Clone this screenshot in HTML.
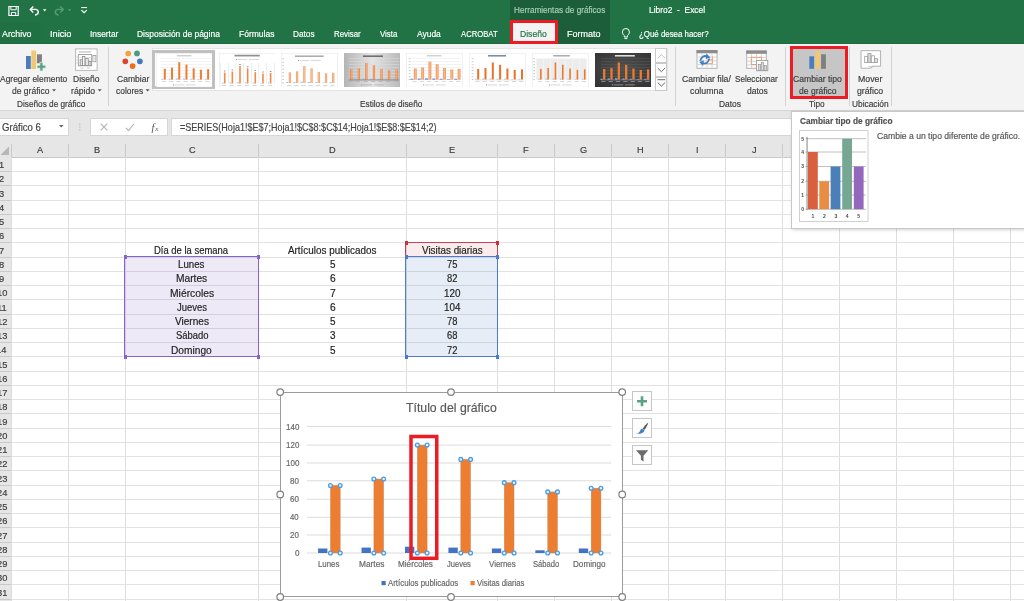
<!DOCTYPE html>
<html lang="es"><head><meta charset="utf-8"><title>Libro2 - Excel</title>
<style>
html,body{margin:0;padding:0;background:#fff;}
body{width:1024px;height:601px;overflow:hidden;position:relative;font-family:"Liberation Sans",sans-serif;}
#app{will-change:transform;position:absolute;left:0;top:0;width:1024px;height:601px;overflow:hidden;}
.r{position:absolute;display:block;}
.t{position:absolute;white-space:pre;display:block;-webkit-text-stroke:0.18px currentColor;}
</style></head><body><div id="app">
<div class="r" style="left:0.00px;top:0.00px;width:1024.00px;height:44.00px;background:#217346;"></div>
<div class="r" style="left:0.00px;top:22.50px;width:41.30px;height:21.50px;background:#207044;"></div>
<div class="r" style="left:0.00px;top:43.00px;width:1024.00px;height:1.00px;background:#1e6c42;"></div>
<div class="r" style="left:509.80px;top:0.00px;width:100.40px;height:44.00px;background:#1b5e39;"></div>
<span class="t" style="left:1.88px;top:27.50px;font-size:9.40px;line-height:12px;color:#fff;transform:scaleX(0.9440);transform-origin:0 0;">Archivo</span>
<span class="t" style="left:49.95px;top:27.50px;font-size:9.40px;line-height:12px;color:#fff;transform:scaleX(0.9815);transform-origin:0 0;">Inicio</span>
<span class="t" style="left:90.03px;top:27.50px;font-size:9.40px;line-height:12px;color:#fff;transform:scaleX(0.8916);transform-origin:0 0;">Insertar</span>
<span class="t" style="left:137.10px;top:27.50px;font-size:9.40px;line-height:12px;color:#fff;transform:scaleX(0.9035);transform-origin:0 0;">Disposición de página</span>
<span class="t" style="left:239.30px;top:27.50px;font-size:9.40px;line-height:12px;color:#fff;transform:scaleX(0.9064);transform-origin:0 0;">Fórmulas</span>
<span class="t" style="left:293.32px;top:27.50px;font-size:9.40px;line-height:12px;color:#fff;transform:scaleX(0.8787);transform-origin:0 0;">Datos</span>
<span class="t" style="left:333.95px;top:27.50px;font-size:9.40px;line-height:12px;color:#fff;transform:scaleX(0.8405);transform-origin:0 0;">Revisar</span>
<span class="t" style="left:380.17px;top:27.50px;font-size:9.40px;line-height:12px;color:#fff;transform:scaleX(0.8391);transform-origin:0 0;">Vista</span>
<span class="t" style="left:417.08px;top:27.50px;font-size:9.40px;line-height:12px;color:#fff;transform:scaleX(0.9011);transform-origin:0 0;">Ayuda</span>
<span class="t" style="left:460.58px;top:27.50px;font-size:9.40px;line-height:12px;color:#fff;transform:scaleX(0.8207);transform-origin:0 0;">ACROBAT</span>
<div class="r" style="left:512.00px;top:22.00px;width:44.00px;height:22.00px;background:#f3f3f3;"></div>
<span class="t" style="left:520.09px;top:27.50px;font-size:9.40px;line-height:12px;color:#217346;transform:scaleX(0.9148);transform-origin:0 0;">Diseño</span>
<div class="r" style="left:509.70px;top:20.40px;width:48.70px;height:23.80px;border:3.300px solid #ed1c24;box-sizing:border-box;"></div>
<span class="t" style="left:567.26px;top:27.50px;font-size:9.40px;line-height:12px;color:#fff;transform:scaleX(0.9606);transform-origin:0 0;">Formato</span>
<span class="t" style="left:639.49px;top:27.50px;font-size:9.40px;line-height:12px;color:#fff;transform:scaleX(0.8401);transform-origin:0 0;">¿Qué desea hacer?</span>
<span class="t" style="left:514.33px;top:4.00px;font-size:9.40px;line-height:12px;color:#a9d0b9;transform:scaleX(0.8710);transform-origin:0 0;">Herramientas de gráficos</span>
<span class="t" style="left:648.81px;top:4.00px;font-size:9.40px;line-height:12px;color:#fff;transform:scaleX(0.8973);transform-origin:0 0;">Libro2  -  Excel</span>
<svg class="r" style="left:0;top:0" width="1024" height="44" viewBox="0 0 1024 44">
<g fill="none" stroke="#fff" stroke-width="1.2">
<path d="M8.900 6.500h9.300v9h-9.300z"/><path d="M10.900 6.500v3.300h5.300v-3.300" stroke-width="1"/><path d="M11.400 15.500v-3h4.300v3" stroke-width="1"/>
<path d="M30.300 9.400h5.300a2.700 2.700 0 0 1 2.700 2.700c0 1.600-1.300 2.700-3.300 2.900" stroke-width="1.400"/><path d="M33.300 6.400l-3 3 3 3" stroke-width="1.400"/>
<path d="M63.300 9.400h-5.300a2.700 2.700 0 0 0-2.700 2.700c0 1.600 1.300 2.700 3.300 2.900" stroke="#5a9c7a" stroke-width="1.400"/><path d="M60.300 6.400l3 3-3 3" stroke="#5a9c7a" stroke-width="1.400"/>
<path d="M81.200 7.600h5.800" stroke-width="1"/><path d="M81.400 10.100l2.700 2.600 2.700-2.600"/>
</g>
<path d="M42.900 9.200h3.600l-1.800 2.200z" fill="#fff"/><path d="M68 9.200h3.200l-1.600 2z" fill="#5a9c7a"/>
<g fill="none" stroke="#fff" stroke-width="1"><path d="M624.300 35.600c-1.400-1.400-1.900-2.300-1.900-3.600a3.500 3.500 0 0 1 7 0c0 1.300-.5 2.200-1.900 3.600v1.400h-3.200z"/><path d="M624.500 38.600h2.800"/></g>
</svg>
<div class="r" style="left:0.00px;top:44.00px;width:1024.00px;height:66.00px;background:#f3f3f3;"></div>
<div class="r" style="left:0.00px;top:110.00px;width:1024.00px;height:1.00px;background:#d6d6d6;"></div>
<div class="r" style="left:0.00px;top:111.00px;width:1024.00px;height:30.00px;background:#e6e6e6;"></div>
<div class="r" style="left:107.80px;top:47.00px;width:1.00px;height:59.00px;background:#d2d2d2;"></div>
<div class="r" style="left:675.30px;top:47.00px;width:1.00px;height:59.00px;background:#d2d2d2;"></div>
<div class="r" style="left:785.30px;top:47.00px;width:1.00px;height:59.00px;background:#d2d2d2;"></div>
<div class="r" style="left:849.20px;top:47.00px;width:1.00px;height:59.00px;background:#d2d2d2;"></div>
<div class="r" style="left:891.00px;top:47.00px;width:1.00px;height:59.00px;background:#d2d2d2;"></div>
<span class="t" style="left:0.48px;top:72.80px;font-size:9.40px;line-height:12px;color:#3c3c3c;transform:scaleX(0.9016);transform-origin:0 0;">Agregar elemento</span>
<span class="t" style="left:12.14px;top:84.75px;font-size:9.40px;line-height:12px;color:#3c3c3c;transform:scaleX(0.9088);transform-origin:0 0;">de gráfico</span>
<span class="t" style="left:73.10px;top:72.80px;font-size:9.40px;line-height:12px;color:#3c3c3c;transform:scaleX(0.9077);transform-origin:0 0;">Diseño</span>
<span class="t" style="left:71.22px;top:84.75px;font-size:9.40px;line-height:12px;color:#3c3c3c;transform:scaleX(0.9239);transform-origin:0 0;">rápido</span>
<span class="t" style="left:16.62px;top:97.80px;font-size:9.40px;line-height:12px;color:#3c3c3c;transform:scaleX(0.8789);transform-origin:0 0;">Diseños de gráfico</span>
<span class="t" style="left:117.06px;top:72.80px;font-size:9.40px;line-height:12px;color:#3c3c3c;transform:scaleX(0.9115);transform-origin:0 0;">Cambiar</span>
<span class="t" style="left:116.44px;top:84.75px;font-size:9.40px;line-height:12px;color:#3c3c3c;transform:scaleX(0.8964);transform-origin:0 0;">colores</span>
<span class="t" style="left:360.17px;top:97.80px;font-size:9.40px;line-height:12px;color:#3c3c3c;transform:scaleX(0.8798);transform-origin:0 0;">Estilos de diseño</span>
<span class="t" style="left:682.31px;top:72.80px;font-size:9.40px;line-height:12px;color:#3c3c3c;transform:scaleX(0.9276);transform-origin:0 0;">Cambiar fila/</span>
<span class="t" style="left:690.32px;top:84.75px;font-size:9.40px;line-height:12px;color:#3c3c3c;transform:scaleX(0.9394);transform-origin:0 0;">columna</span>
<span class="t" style="left:735.28px;top:72.80px;font-size:9.40px;line-height:12px;color:#3c3c3c;transform:scaleX(0.8716);transform-origin:0 0;">Seleccionar</span>
<span class="t" style="left:746.54px;top:84.75px;font-size:9.40px;line-height:12px;color:#3c3c3c;transform:scaleX(0.9074);transform-origin:0 0;">datos</span>
<span class="t" style="left:718.81px;top:97.80px;font-size:9.40px;line-height:12px;color:#3c3c3c;transform:scaleX(0.8957);transform-origin:0 0;">Datos</span>
<div class="r" style="left:793.00px;top:47.50px;width:52.50px;height:48.50px;background:#c6c6c6;"></div>
<div class="r" style="left:790.20px;top:45.70px;width:58.00px;height:53.20px;border:3.200px solid #ed1c24;box-sizing:border-box;"></div>
<span class="t" style="left:793.46px;top:72.80px;font-size:9.40px;line-height:12px;color:#3c3c3c;transform:scaleX(0.9196);transform-origin:0 0;">Cambiar tipo</span>
<span class="t" style="left:798.74px;top:84.75px;font-size:9.40px;line-height:12px;color:#3c3c3c;transform:scaleX(0.9138);transform-origin:0 0;">de gráfico</span>
<span class="t" style="left:809.06px;top:97.80px;font-size:9.40px;line-height:12px;color:#3c3c3c;transform:scaleX(0.8767);transform-origin:0 0;">Tipo</span>
<span class="t" style="left:858.03px;top:72.80px;font-size:9.40px;line-height:12px;color:#3c3c3c;transform:scaleX(0.9329);transform-origin:0 0;">Mover</span>
<span class="t" style="left:857.38px;top:84.75px;font-size:9.40px;line-height:12px;color:#3c3c3c;transform:scaleX(0.9298);transform-origin:0 0;">gráfico</span>
<span class="t" style="left:852.11px;top:97.80px;font-size:9.40px;line-height:12px;color:#3c3c3c;transform:scaleX(0.8888);transform-origin:0 0;">Ubicación</span>
<svg class="r" style="left:0;top:44px" width="1024" height="70" viewBox="0 44 1024 70"><g fill="#555"><path d="M52 89.300h4l-2 2.300z"/><path d="M97.700 89.300h4l-2 2.300z"/><path d="M145.600 89.300h4l-2 2.300z"/></g></svg>
<div class="r" style="left:151.50px;top:47.80px;width:516.00px;height:43.20px;background:#fff;border:1px solid #e4e4e4;box-sizing:border-box;"></div>
<div class="r" style="left:152.30px;top:49.70px;width:62.70px;height:39.80px;border:3.300px solid #c0c0c0;box-sizing:border-box;"></div>
<svg class="r" style="left:155.8px;top:52.5px" width="56.5" height="34.3" viewBox="0 0 56.500 34.300"><rect x=".25" y=".25" width="56" height="33.800" fill="#fff" stroke="#e3e3e3" stroke-width=".5"/><rect x="4.7" y="26.35" width="50.3" height=".5" fill="#e6e6e6"/><rect x="4.7" y="23.38" width="50.3" height=".5" fill="#e6e6e6"/><rect x="4.7" y="20.41" width="50.3" height=".5" fill="#e6e6e6"/><rect x="4.7" y="17.44" width="50.3" height=".5" fill="#e6e6e6"/><rect x="4.7" y="14.46" width="50.3" height=".5" fill="#e6e6e6"/><rect x="4.7" y="11.49" width="50.3" height=".5" fill="#e6e6e6"/><rect x="4.7" y="8.52" width="50.3" height=".5" fill="#e6e6e6"/><rect x="4.7" y="5.55" width="50.3" height=".5" fill="#e6e6e6"/><rect x="7.80" y="15.72" width="2.00" height="10.88" fill="#ed7d31"/><rect x="5.40" y="25.66" width="2.00" height="0.94" fill="#a9c3ea"/><rect x="15.02" y="14.71" width="2.00" height="11.89" fill="#ed7d31"/><rect x="12.62" y="25.47" width="2.00" height="1.13" fill="#a9c3ea"/><rect x="22.24" y="9.20" width="2.00" height="17.40" fill="#ed7d31"/><rect x="19.84" y="25.28" width="2.00" height="1.32" fill="#a9c3ea"/><rect x="29.46" y="11.52" width="2.00" height="15.08" fill="#ed7d31"/><rect x="27.06" y="25.47" width="2.00" height="1.13" fill="#a9c3ea"/><rect x="36.68" y="15.29" width="2.00" height="11.31" fill="#ed7d31"/><rect x="34.28" y="25.66" width="2.00" height="0.94" fill="#a9c3ea"/><rect x="43.90" y="16.74" width="2.00" height="9.86" fill="#ed7d31"/><rect x="41.50" y="26.03" width="2.00" height="0.57" fill="#a9c3ea"/><rect x="51.12" y="16.16" width="2.00" height="10.44" fill="#ed7d31"/><rect x="48.72" y="25.66" width="2.00" height="0.94" fill="#a9c3ea"/><rect x="20.9" y="2.25" width="14.5" height="1.1" fill="#c2c2c2"/><rect x="5.90" y="28.20" width="4.200" height=".800" fill="#cfcfcf"/><rect x="13.12" y="28.20" width="4.200" height=".800" fill="#cfcfcf"/><rect x="20.34" y="28.20" width="4.200" height=".800" fill="#cfcfcf"/><rect x="27.56" y="28.20" width="4.200" height=".800" fill="#cfcfcf"/><rect x="34.78" y="28.20" width="4.200" height=".800" fill="#cfcfcf"/><rect x="42.00" y="28.20" width="4.200" height=".800" fill="#cfcfcf"/><rect x="49.22" y="28.20" width="4.200" height=".800" fill="#cfcfcf"/><rect x="17" y="31.35" width="1.100" height="1.100" fill="#7da2dd"/><rect x="18.700" y="31.50" width="9.500" height=".800" fill="#cfcfcf"/><rect x="30.500" y="31.35" width="1.100" height="1.100" fill="#f0a068"/><rect x="32.200" y="31.50" width="7.500" height=".800" fill="#cfcfcf"/></svg>
<svg class="r" style="left:218.5px;top:52.5px" width="56.5" height="34.3" viewBox="0 0 56.500 34.300"><rect x=".25" y=".25" width="56" height="33.800" fill="#fff" stroke="#e3e3e3" stroke-width=".5"/><rect x="1.40" y="10" width=".5" height="20.500" fill="#dcdcdc"/><rect x="9.05" y="10" width=".5" height="20.500" fill="#dcdcdc"/><rect x="16.70" y="10" width=".5" height="20.500" fill="#dcdcdc"/><rect x="24.35" y="10" width=".5" height="20.500" fill="#dcdcdc"/><rect x="32.00" y="10" width=".5" height="20.500" fill="#dcdcdc"/><rect x="39.65" y="10" width=".5" height="20.500" fill="#dcdcdc"/><rect x="47.30" y="10" width=".5" height="20.500" fill="#dcdcdc"/><rect x="54.95" y="10" width=".5" height="20.500" fill="#dcdcdc"/><rect x="4.90" y="19.56" width="1.60" height="10.94" fill="#f08a45"/><rect x="4.90" y="17.56" width="1.600" height=".900" fill="#8a8a8a"/><rect x="2.90" y="29.55" width="1.60" height="0.95" fill="#a9c3ea"/><rect x="12.55" y="18.54" width="1.60" height="11.96" fill="#f08a45"/><rect x="12.55" y="16.54" width="1.600" height=".900" fill="#8a8a8a"/><rect x="10.55" y="29.36" width="1.60" height="1.14" fill="#a9c3ea"/><rect x="20.20" y="13.00" width="1.60" height="17.50" fill="#f08a45"/><rect x="20.20" y="11.00" width="1.600" height=".900" fill="#8a8a8a"/><rect x="18.20" y="29.17" width="1.60" height="1.33" fill="#a9c3ea"/><rect x="27.85" y="15.33" width="1.60" height="15.17" fill="#f08a45"/><rect x="27.85" y="13.33" width="1.600" height=".900" fill="#8a8a8a"/><rect x="25.85" y="29.36" width="1.60" height="1.14" fill="#a9c3ea"/><rect x="35.50" y="19.12" width="1.60" height="11.38" fill="#f08a45"/><rect x="35.50" y="17.12" width="1.600" height=".900" fill="#8a8a8a"/><rect x="33.50" y="29.55" width="1.60" height="0.95" fill="#a9c3ea"/><rect x="43.15" y="20.58" width="1.60" height="9.92" fill="#f08a45"/><rect x="43.15" y="18.58" width="1.600" height=".900" fill="#8a8a8a"/><rect x="41.15" y="29.93" width="1.60" height="0.57" fill="#a9c3ea"/><rect x="50.80" y="20.00" width="1.60" height="10.50" fill="#f08a45"/><rect x="50.80" y="18.00" width="1.600" height=".900" fill="#8a8a8a"/><rect x="48.80" y="29.55" width="1.60" height="0.95" fill="#a9c3ea"/><rect x="15.5" y="1.75" width="25.3" height="1.7" fill="#8f8f8f"/><rect x="2.80" y="32.10" width="4.200" height=".800" fill="#cfcfcf"/><rect x="10.45" y="32.10" width="4.200" height=".800" fill="#cfcfcf"/><rect x="18.10" y="32.10" width="4.200" height=".800" fill="#cfcfcf"/><rect x="25.75" y="32.10" width="4.200" height=".800" fill="#cfcfcf"/><rect x="33.40" y="32.10" width="4.200" height=".800" fill="#cfcfcf"/><rect x="41.05" y="32.10" width="4.200" height=".800" fill="#cfcfcf"/><rect x="48.70" y="32.10" width="4.200" height=".800" fill="#cfcfcf"/><rect x="17" y="5.95" width="1.100" height="1.100" fill="#7da2dd"/><rect x="18.700" y="6.10" width="9.500" height=".800" fill="#cfcfcf"/><rect x="30.500" y="5.95" width="1.100" height="1.100" fill="#f0a068"/><rect x="32.200" y="6.10" width="7.500" height=".800" fill="#cfcfcf"/></svg>
<svg class="r" style="left:281.3px;top:52.5px" width="56.5" height="34.3" viewBox="0 0 56.500 34.300"><rect x=".25" y=".25" width="56" height="33.800" fill="#fff" stroke="#e3e3e3" stroke-width=".5"/><rect x="1.2" y="29.65" width="1.800" height=".700" fill="#b5b5b5"/><rect x="1.2" y="26.19" width="1.800" height=".700" fill="#b5b5b5"/><rect x="1.2" y="22.74" width="1.800" height=".700" fill="#b5b5b5"/><rect x="1.2" y="19.28" width="1.800" height=".700" fill="#b5b5b5"/><rect x="1.2" y="15.82" width="1.800" height=".700" fill="#b5b5b5"/><rect x="1.2" y="12.36" width="1.800" height=".700" fill="#b5b5b5"/><rect x="1.2" y="8.91" width="1.800" height=".700" fill="#b5b5b5"/><rect x="1.2" y="5.45" width="1.800" height=".700" fill="#b5b5b5"/><rect x="7.75" y="19.38" width="2.30" height="10.62" fill="#f2a46e"/><rect x="8.65" y="19.38" width=".5" height="10.62" fill="#fff" opacity=".5"/><rect x="5.05" y="29.08" width="2.30" height="0.92" fill="#a9c3ea"/><rect x="14.97" y="18.38" width="2.30" height="11.62" fill="#f2a46e"/><rect x="15.87" y="18.38" width=".5" height="11.62" fill="#fff" opacity=".5"/><rect x="12.27" y="28.89" width="2.30" height="1.10" fill="#a9c3ea"/><rect x="22.19" y="13.00" width="2.30" height="17.00" fill="#f2a46e"/><rect x="23.09" y="13.00" width=".5" height="17.00" fill="#fff" opacity=".5"/><rect x="19.49" y="28.71" width="2.30" height="1.29" fill="#a9c3ea"/><rect x="29.41" y="15.27" width="2.30" height="14.73" fill="#f2a46e"/><rect x="30.31" y="15.27" width=".5" height="14.73" fill="#fff" opacity=".5"/><rect x="26.71" y="28.89" width="2.30" height="1.10" fill="#a9c3ea"/><rect x="36.63" y="18.95" width="2.30" height="11.05" fill="#f2a46e"/><rect x="37.53" y="18.95" width=".5" height="11.05" fill="#fff" opacity=".5"/><rect x="33.93" y="29.08" width="2.30" height="0.92" fill="#a9c3ea"/><rect x="43.85" y="20.37" width="2.30" height="9.63" fill="#f2a46e"/><rect x="44.75" y="20.37" width=".5" height="9.63" fill="#fff" opacity=".5"/><rect x="41.15" y="29.45" width="2.30" height="0.55" fill="#a9c3ea"/><rect x="51.07" y="19.80" width="2.30" height="10.20" fill="#f2a46e"/><rect x="51.97" y="19.80" width=".5" height="10.20" fill="#fff" opacity=".5"/><rect x="48.37" y="29.08" width="2.30" height="0.92" fill="#a9c3ea"/><rect x="13.9" y="2.45" width="28.9" height="1.5" fill="#a8a8a8"/><rect x="6.00" y="32.10" width="4.200" height=".800" fill="#cfcfcf"/><rect x="13.22" y="32.10" width="4.200" height=".800" fill="#cfcfcf"/><rect x="20.44" y="32.10" width="4.200" height=".800" fill="#cfcfcf"/><rect x="27.66" y="32.10" width="4.200" height=".800" fill="#cfcfcf"/><rect x="34.88" y="32.10" width="4.200" height=".800" fill="#cfcfcf"/><rect x="42.10" y="32.10" width="4.200" height=".800" fill="#cfcfcf"/><rect x="49.32" y="32.10" width="4.200" height=".800" fill="#cfcfcf"/><rect x="17" y="6.95" width="1.100" height="1.100" fill="#7da2dd"/><rect x="18.700" y="7.10" width="9.500" height=".800" fill="#cfcfcf"/><rect x="30.500" y="6.95" width="1.100" height="1.100" fill="#f0a068"/><rect x="32.200" y="7.10" width="7.500" height=".800" fill="#cfcfcf"/></svg>
<svg class="r" style="left:343.5px;top:52.5px" width="56.5" height="34.3" viewBox="0 0 56.500 34.300"><defs><linearGradient id="gg" x1="0" x2="1"><stop offset="0" stop-color="#b4b4b4"/><stop offset=".5" stop-color="#e4e4e4"/><stop offset="1" stop-color="#b9b9b9"/></linearGradient></defs><rect width="56.500" height="34.300" fill="url(#gg)"/><rect x="4.7" y="26.45" width="50.3" height=".5" fill="#dedede"/><rect x="4.7" y="23.46" width="50.3" height=".5" fill="#dedede"/><rect x="4.7" y="20.48" width="50.3" height=".5" fill="#dedede"/><rect x="4.7" y="17.49" width="50.3" height=".5" fill="#dedede"/><rect x="4.7" y="14.51" width="50.3" height=".5" fill="#dedede"/><rect x="4.7" y="11.52" width="50.3" height=".5" fill="#dedede"/><rect x="4.7" y="8.54" width="50.3" height=".5" fill="#dedede"/><rect x="4.7" y="5.55" width="50.3" height=".5" fill="#dedede"/><rect x="6.05" y="16.26" width="2.30" height="10.44" fill="#f08a45"/><rect x="6.95" y="16.26" width=".5" height="10.44" fill="#fff" opacity=".5"/><rect x="3.35" y="25.80" width="2.30" height="0.90" fill="#a9c3ea"/><rect x="13.63" y="15.29" width="2.30" height="11.41" fill="#f08a45"/><rect x="14.53" y="15.29" width=".5" height="11.41" fill="#fff" opacity=".5"/><rect x="10.93" y="25.61" width="2.30" height="1.09" fill="#a9c3ea"/><rect x="21.21" y="10.00" width="2.30" height="16.70" fill="#f08a45"/><rect x="22.11" y="10.00" width=".5" height="16.70" fill="#fff" opacity=".5"/><rect x="18.51" y="25.43" width="2.30" height="1.27" fill="#a9c3ea"/><rect x="28.79" y="12.23" width="2.30" height="14.47" fill="#f08a45"/><rect x="29.69" y="12.23" width=".5" height="14.47" fill="#fff" opacity=".5"/><rect x="26.09" y="25.61" width="2.30" height="1.09" fill="#a9c3ea"/><rect x="36.37" y="15.84" width="2.30" height="10.86" fill="#f08a45"/><rect x="37.27" y="15.84" width=".5" height="10.86" fill="#fff" opacity=".5"/><rect x="33.67" y="25.80" width="2.30" height="0.90" fill="#a9c3ea"/><rect x="43.95" y="17.24" width="2.30" height="9.46" fill="#f08a45"/><rect x="44.85" y="17.24" width=".5" height="9.46" fill="#fff" opacity=".5"/><rect x="41.25" y="26.16" width="2.30" height="0.54" fill="#a9c3ea"/><rect x="51.53" y="16.68" width="2.30" height="10.02" fill="#f08a45"/><rect x="52.43" y="16.68" width=".5" height="10.02" fill="#fff" opacity=".5"/><rect x="48.83" y="25.80" width="2.30" height="0.90" fill="#a9c3ea"/><rect x="4.7" y="26.60" width="50.3" height=".700" fill="#6a6a6a"/><rect x="18.9" y="2.40" width="20.1" height="1.6" fill="#6f6f6f"/><rect x="4.30" y="28.20" width="4.200" height=".800" fill="#b3b3b3"/><rect x="11.88" y="28.20" width="4.200" height=".800" fill="#b3b3b3"/><rect x="19.46" y="28.20" width="4.200" height=".800" fill="#b3b3b3"/><rect x="27.04" y="28.20" width="4.200" height=".800" fill="#b3b3b3"/><rect x="34.62" y="28.20" width="4.200" height=".800" fill="#b3b3b3"/><rect x="42.20" y="28.20" width="4.200" height=".800" fill="#b3b3b3"/><rect x="49.78" y="28.20" width="4.200" height=".800" fill="#b3b3b3"/><rect x="17" y="31.35" width="1.100" height="1.100" fill="#7da2dd"/><rect x="18.700" y="31.50" width="9.500" height=".800" fill="#b3b3b3"/><rect x="30.500" y="31.35" width="1.100" height="1.100" fill="#f0a068"/><rect x="32.200" y="31.50" width="7.500" height=".800" fill="#b3b3b3"/></svg>
<svg class="r" style="left:406.4px;top:52.5px" width="56.5" height="34.3" viewBox="0 0 56.500 34.300"><rect x=".25" y=".25" width="56" height="33.800" fill="#fff" stroke="#e3e3e3" stroke-width=".5"/><rect x="5.5" y="26.45" width="49.5" height=".5" fill="#e6e6e6"/><rect x="5.5" y="23.46" width="49.5" height=".5" fill="#e6e6e6"/><rect x="5.5" y="20.48" width="49.5" height=".5" fill="#e6e6e6"/><rect x="5.5" y="17.49" width="49.5" height=".5" fill="#e6e6e6"/><rect x="5.5" y="14.51" width="49.5" height=".5" fill="#e6e6e6"/><rect x="5.5" y="11.52" width="49.5" height=".5" fill="#e6e6e6"/><rect x="5.5" y="8.54" width="49.5" height=".5" fill="#e6e6e6"/><rect x="5.5" y="5.55" width="49.5" height=".5" fill="#e6e6e6"/><rect x="2.7" y="26.35" width="1.800" height=".700" fill="#b5b5b5"/><rect x="2.7" y="23.36" width="1.800" height=".700" fill="#b5b5b5"/><rect x="2.7" y="20.38" width="1.800" height=".700" fill="#b5b5b5"/><rect x="2.7" y="17.39" width="1.800" height=".700" fill="#b5b5b5"/><rect x="2.7" y="14.41" width="1.800" height=".700" fill="#b5b5b5"/><rect x="2.7" y="11.42" width="1.800" height=".700" fill="#b5b5b5"/><rect x="2.7" y="8.44" width="1.800" height=".700" fill="#b5b5b5"/><rect x="2.7" y="5.45" width="1.800" height=".700" fill="#b5b5b5"/><rect x="7.80" y="15.45" width="3.00" height="11.25" fill="#f2a06a"/><rect x="9.05" y="15.45" width=".5" height="11.25" fill="#fff" opacity=".5"/><rect x="4.40" y="25.72" width="3.00" height="0.98" fill="#5b8bd6"/><rect x="15.10" y="14.40" width="3.00" height="12.30" fill="#f2a06a"/><rect x="16.35" y="14.40" width=".5" height="12.30" fill="#fff" opacity=".5"/><rect x="11.70" y="25.53" width="3.00" height="1.17" fill="#5b8bd6"/><rect x="22.40" y="8.70" width="3.00" height="18.00" fill="#f2a06a"/><rect x="23.65" y="8.70" width=".5" height="18.00" fill="#fff" opacity=".5"/><rect x="19.00" y="25.34" width="3.00" height="1.37" fill="#5b8bd6"/><rect x="29.70" y="11.10" width="3.00" height="15.60" fill="#f2a06a"/><rect x="30.95" y="11.10" width=".5" height="15.60" fill="#fff" opacity=".5"/><rect x="26.30" y="25.53" width="3.00" height="1.17" fill="#5b8bd6"/><rect x="37.00" y="15.00" width="3.00" height="11.70" fill="#f2a06a"/><rect x="38.25" y="15.00" width=".5" height="11.70" fill="#fff" opacity=".5"/><rect x="33.60" y="25.72" width="3.00" height="0.98" fill="#5b8bd6"/><rect x="44.30" y="16.50" width="3.00" height="10.20" fill="#f2a06a"/><rect x="45.55" y="16.50" width=".5" height="10.20" fill="#fff" opacity=".5"/><rect x="40.90" y="26.11" width="3.00" height="0.58" fill="#5b8bd6"/><rect x="51.60" y="15.90" width="3.00" height="10.80" fill="#f2a06a"/><rect x="52.85" y="15.90" width=".5" height="10.80" fill="#fff" opacity=".5"/><rect x="48.20" y="25.72" width="3.00" height="0.98" fill="#5b8bd6"/><rect x="20.9" y="2.25" width="14.5" height="1.1" fill="#c2c2c2"/><rect x="6.40" y="28.20" width="4.200" height=".800" fill="#cfcfcf"/><rect x="13.70" y="28.20" width="4.200" height=".800" fill="#cfcfcf"/><rect x="21.00" y="28.20" width="4.200" height=".800" fill="#cfcfcf"/><rect x="28.30" y="28.20" width="4.200" height=".800" fill="#cfcfcf"/><rect x="35.60" y="28.20" width="4.200" height=".800" fill="#cfcfcf"/><rect x="42.90" y="28.20" width="4.200" height=".800" fill="#cfcfcf"/><rect x="50.20" y="28.20" width="4.200" height=".800" fill="#cfcfcf"/><rect x="17" y="31.35" width="1.100" height="1.100" fill="#7da2dd"/><rect x="18.700" y="31.50" width="9.500" height=".800" fill="#cfcfcf"/><rect x="30.500" y="31.35" width="1.100" height="1.100" fill="#f0a068"/><rect x="32.200" y="31.50" width="7.500" height=".800" fill="#cfcfcf"/></svg>
<svg class="r" style="left:469.4px;top:52.5px" width="56.5" height="34.3" viewBox="0 0 56.500 34.300"><rect x=".25" y=".25" width="56" height="33.800" fill="#fff" stroke="#e3e3e3" stroke-width=".5"/><rect x="2.7" y="26.35" width="1.800" height=".700" fill="#b5b5b5"/><rect x="2.7" y="23.36" width="1.800" height=".700" fill="#b5b5b5"/><rect x="2.7" y="20.38" width="1.800" height=".700" fill="#b5b5b5"/><rect x="2.7" y="17.39" width="1.800" height=".700" fill="#b5b5b5"/><rect x="2.7" y="14.41" width="1.800" height=".700" fill="#b5b5b5"/><rect x="2.7" y="11.42" width="1.800" height=".700" fill="#b5b5b5"/><rect x="2.7" y="8.44" width="1.800" height=".700" fill="#b5b5b5"/><rect x="2.7" y="5.45" width="1.800" height=".700" fill="#b5b5b5"/><rect x="8.20" y="15.95" width="2.00" height="10.75" fill="#e8722a"/><rect x="5.80" y="25.77" width="2.00" height="0.93" fill="#a9c3ea"/><rect x="15.50" y="14.95" width="2.00" height="11.75" fill="#e8722a"/><rect x="13.10" y="25.58" width="2.00" height="1.12" fill="#a9c3ea"/><rect x="22.80" y="9.50" width="2.00" height="17.20" fill="#e8722a"/><rect x="20.40" y="25.40" width="2.00" height="1.30" fill="#a9c3ea"/><rect x="30.10" y="11.79" width="2.00" height="14.91" fill="#e8722a"/><rect x="27.70" y="25.58" width="2.00" height="1.12" fill="#a9c3ea"/><rect x="37.40" y="15.52" width="2.00" height="11.18" fill="#e8722a"/><rect x="35.00" y="25.77" width="2.00" height="0.93" fill="#a9c3ea"/><rect x="44.70" y="16.95" width="2.00" height="9.75" fill="#e8722a"/><rect x="42.30" y="26.14" width="2.00" height="0.56" fill="#a9c3ea"/><rect x="52.00" y="16.38" width="2.00" height="10.32" fill="#e8722a"/><rect x="49.60" y="25.77" width="2.00" height="0.93" fill="#a9c3ea"/><rect x="5.5" y="26.60" width="49.5" height=".700" fill="#d9d9d9"/><rect x="19.0" y="2.05" width="18.0" height="1.5" fill="#7b84a0"/><rect x="6.30" y="28.20" width="4.200" height=".800" fill="#cfcfcf"/><rect x="13.60" y="28.20" width="4.200" height=".800" fill="#cfcfcf"/><rect x="20.90" y="28.20" width="4.200" height=".800" fill="#cfcfcf"/><rect x="28.20" y="28.20" width="4.200" height=".800" fill="#cfcfcf"/><rect x="35.50" y="28.20" width="4.200" height=".800" fill="#cfcfcf"/><rect x="42.80" y="28.20" width="4.200" height=".800" fill="#cfcfcf"/><rect x="50.10" y="28.20" width="4.200" height=".800" fill="#cfcfcf"/><rect x="17" y="31.35" width="1.100" height="1.100" fill="#7da2dd"/><rect x="18.700" y="31.50" width="9.500" height=".800" fill="#cfcfcf"/><rect x="30.500" y="31.35" width="1.100" height="1.100" fill="#f0a068"/><rect x="32.200" y="31.50" width="7.500" height=".800" fill="#cfcfcf"/></svg>
<svg class="r" style="left:532.1px;top:52.5px" width="56.5" height="34.3" viewBox="0 0 56.500 34.300"><rect x=".25" y=".25" width="56" height="33.800" fill="#fff" stroke="#e3e3e3" stroke-width=".5"/><rect x="4.0" y="5.500" width="51.0" height="21.2" fill="#ececec"/><rect x="4.0" y="5.500" width=".5" height="21.2" fill="#fafafa"/><rect x="11.2" y="5.500" width=".5" height="21.2" fill="#fafafa"/><rect x="18.4" y="5.500" width=".5" height="21.2" fill="#fafafa"/><rect x="25.6" y="5.500" width=".5" height="21.2" fill="#fafafa"/><rect x="32.8" y="5.500" width=".5" height="21.2" fill="#fafafa"/><rect x="40.0" y="5.500" width=".5" height="21.2" fill="#fafafa"/><rect x="47.2" y="5.500" width=".5" height="21.2" fill="#fafafa"/><rect x="54.4" y="5.500" width=".5" height="21.2" fill="#fafafa"/><rect x="1.2" y="26.35" width="1.800" height=".700" fill="#b5b5b5"/><rect x="1.2" y="23.36" width="1.800" height=".700" fill="#b5b5b5"/><rect x="1.2" y="20.38" width="1.800" height=".700" fill="#b5b5b5"/><rect x="1.2" y="17.39" width="1.800" height=".700" fill="#b5b5b5"/><rect x="1.2" y="14.41" width="1.800" height=".700" fill="#b5b5b5"/><rect x="1.2" y="11.42" width="1.800" height=".700" fill="#b5b5b5"/><rect x="1.2" y="8.44" width="1.800" height=".700" fill="#b5b5b5"/><rect x="1.2" y="5.45" width="1.800" height=".700" fill="#b5b5b5"/><rect x="8.00" y="15.95" width="1.60" height="10.75" fill="#ec7a2e"/><rect x="6.00" y="25.77" width="1.60" height="0.93" fill="#a9c3ea"/><rect x="15.32" y="14.95" width="1.60" height="11.75" fill="#ec7a2e"/><rect x="13.32" y="25.58" width="1.60" height="1.12" fill="#a9c3ea"/><rect x="22.64" y="9.50" width="1.60" height="17.20" fill="#ec7a2e"/><rect x="20.64" y="25.40" width="1.60" height="1.30" fill="#a9c3ea"/><rect x="29.96" y="11.79" width="1.60" height="14.91" fill="#ec7a2e"/><rect x="27.96" y="25.58" width="1.60" height="1.12" fill="#a9c3ea"/><rect x="37.28" y="15.52" width="1.60" height="11.18" fill="#ec7a2e"/><rect x="35.28" y="25.77" width="1.60" height="0.93" fill="#a9c3ea"/><rect x="44.60" y="16.95" width="1.60" height="9.75" fill="#ec7a2e"/><rect x="42.60" y="26.14" width="1.60" height="0.56" fill="#a9c3ea"/><rect x="51.92" y="16.38" width="1.60" height="10.32" fill="#ec7a2e"/><rect x="49.92" y="25.77" width="1.60" height="0.93" fill="#a9c3ea"/><rect x="21.2" y="2.10" width="16.6" height="1.4" fill="#a5a5a5"/><rect x="5.90" y="28.20" width="4.200" height=".800" fill="#cfcfcf"/><rect x="13.22" y="28.20" width="4.200" height=".800" fill="#cfcfcf"/><rect x="20.54" y="28.20" width="4.200" height=".800" fill="#cfcfcf"/><rect x="27.86" y="28.20" width="4.200" height=".800" fill="#cfcfcf"/><rect x="35.18" y="28.20" width="4.200" height=".800" fill="#cfcfcf"/><rect x="42.50" y="28.20" width="4.200" height=".800" fill="#cfcfcf"/><rect x="49.82" y="28.20" width="4.200" height=".800" fill="#cfcfcf"/><rect x="17" y="31.35" width="1.100" height="1.100" fill="#7da2dd"/><rect x="18.700" y="31.50" width="9.500" height=".800" fill="#cfcfcf"/><rect x="30.500" y="31.35" width="1.100" height="1.100" fill="#f0a068"/><rect x="32.200" y="31.50" width="7.500" height=".800" fill="#cfcfcf"/></svg>
<svg class="r" style="left:594.8px;top:52.5px" width="56.5" height="34.3" viewBox="0 0 56.500 34.300"><defs><radialGradient id="dg" cx=".5" cy=".45" r=".7"><stop offset="0" stop-color="#505050"/><stop offset="1" stop-color="#333"/></radialGradient></defs><rect width="56.500" height="34.300" fill="url(#dg)"/><rect x="6.0" y="26.45" width="49.0" height=".5" fill="#5c5c5c"/><rect x="6.0" y="23.46" width="49.0" height=".5" fill="#5c5c5c"/><rect x="6.0" y="20.48" width="49.0" height=".5" fill="#5c5c5c"/><rect x="6.0" y="17.49" width="49.0" height=".5" fill="#5c5c5c"/><rect x="6.0" y="14.51" width="49.0" height=".5" fill="#5c5c5c"/><rect x="6.0" y="11.52" width="49.0" height=".5" fill="#5c5c5c"/><rect x="6.0" y="8.54" width="49.0" height=".5" fill="#5c5c5c"/><rect x="6.0" y="5.55" width="49.0" height=".5" fill="#5c5c5c"/><rect x="8.05" y="15.95" width="2.30" height="10.75" fill="#ec7a2e"/><rect x="5.35" y="25.77" width="2.30" height="0.93" fill="#a9c3ea"/><rect x="15.37" y="14.95" width="2.30" height="11.75" fill="#ec7a2e"/><rect x="12.67" y="25.58" width="2.30" height="1.12" fill="#a9c3ea"/><rect x="22.69" y="9.50" width="2.30" height="17.20" fill="#ec7a2e"/><rect x="19.99" y="25.40" width="2.30" height="1.30" fill="#a9c3ea"/><rect x="30.01" y="11.79" width="2.30" height="14.91" fill="#ec7a2e"/><rect x="27.31" y="25.58" width="2.30" height="1.12" fill="#a9c3ea"/><rect x="37.33" y="15.52" width="2.30" height="11.18" fill="#ec7a2e"/><rect x="34.63" y="25.77" width="2.30" height="0.93" fill="#a9c3ea"/><rect x="44.65" y="16.95" width="2.30" height="9.75" fill="#ec7a2e"/><rect x="41.95" y="26.14" width="2.30" height="0.56" fill="#a9c3ea"/><rect x="51.97" y="16.38" width="2.30" height="10.32" fill="#ec7a2e"/><rect x="49.27" y="25.77" width="2.30" height="0.93" fill="#a9c3ea"/><rect x="6.0" y="26.60" width="49.0" height=".700" fill="#6d86b5"/><rect x="19.9" y="2.05" width="19.9" height="1.5" fill="#e8e8e8"/><rect x="6.30" y="28.20" width="4.200" height=".800" fill="#9a9a9a"/><rect x="13.62" y="28.20" width="4.200" height=".800" fill="#9a9a9a"/><rect x="20.94" y="28.20" width="4.200" height=".800" fill="#9a9a9a"/><rect x="28.26" y="28.20" width="4.200" height=".800" fill="#9a9a9a"/><rect x="35.58" y="28.20" width="4.200" height=".800" fill="#9a9a9a"/><rect x="42.90" y="28.20" width="4.200" height=".800" fill="#9a9a9a"/><rect x="50.22" y="28.20" width="4.200" height=".800" fill="#9a9a9a"/><rect x="17" y="31.35" width="1.100" height="1.100" fill="#7da2dd"/><rect x="18.700" y="31.50" width="9.500" height=".800" fill="#9a9a9a"/><rect x="30.500" y="31.35" width="1.100" height="1.100" fill="#f0a068"/><rect x="32.200" y="31.50" width="7.500" height=".800" fill="#9a9a9a"/></svg>
<div class="r" style="left:655.30px;top:48.30px;width:12.20px;height:14.40px;background:#fdfdfd;border:1px solid #c9c9c9;box-sizing:border-box;"></div>
<div class="r" style="left:655.30px;top:63.30px;width:12.20px;height:13.40px;background:#fdfdfd;border:1px solid #c9c9c9;box-sizing:border-box;"></div>
<div class="r" style="left:655.30px;top:77.40px;width:12.20px;height:13.40px;background:#fdfdfd;border:1px solid #c9c9c9;box-sizing:border-box;"></div>
<svg class="r" style="left:655px;top:48px" width="13" height="44" viewBox="655 48 13 44"><g fill="none" stroke="#c4c4c4" stroke-width="1"><path d="M657.700 58.300l3.700-3.700 3.700 3.700" /></g><g fill="none" stroke="#6a6a6a" stroke-width="1"><path d="M657.700 68l3.700 3.700 3.700-3.700"/><path d="M657.500 79.700h7.800"/><path d="M657.700 82.500l3.700 3.700 3.700-3.700"/></g></svg>
<div class="r" style="left:-1.00px;top:117.60px;width:70.00px;height:18.00px;background:#fff;border:1px solid #d6d6d6;box-sizing:border-box;"></div>
<span class="t" style="left:1.52px;top:121.70px;font-size:10.00px;line-height:12px;color:#444;transform:scaleX(0.9589);transform-origin:0 0;">Gráfico 6</span>
<div class="r" style="left:90.30px;top:117.60px;width:78.20px;height:18.00px;background:#fff;border:1px solid #d6d6d6;box-sizing:border-box;"></div>
<div class="r" style="left:171.40px;top:117.60px;width:853.60px;height:18.00px;background:#fff;border:1px solid #d6d6d6;box-sizing:border-box;"></div>
<span class="t" style="left:179.56px;top:121.70px;font-size:10.30px;line-height:12px;color:#444;transform:scaleX(0.8758);transform-origin:0 0;">=SERIES(Hoja1!$E$7;Hoja1!$C$8:$C$14;Hoja1!$E$8:$E$14;2)</span>
<svg class="r" style="left:0;top:116px" width="180" height="22" viewBox="0 116 180 22">
<path d="M59 125h4.600l-2.300 2.600z" fill="#666"/>
<g fill="#b0b0b0"><rect x="79.300" y="123.500" width="1.100" height="1.100"/><rect x="79.300" y="126.400" width="1.100" height="1.100"/><rect x="79.300" y="129.300" width="1.100" height="1.100"/></g>
<g fill="none" stroke="#b4b4b4" stroke-width="1.100"><path d="M100.700 123.700l6.600 6.600M107.300 123.700l-6.600 6.600"/><path d="M126 127.800l2.600 2.900 5.200-6.700"/></g>
<text x="151.500" y="131" font-family="Liberation Serif, serif" font-style="italic" font-size="10.500" fill="#555">f</text>
<text x="155.300" y="131.300" font-family="Liberation Serif, serif" font-style="italic" font-size="7" fill="#555">x</text>
</svg>
<div class="r" style="left:0.00px;top:157.40px;width:1024.00px;height:443.60px;background:#fff;"></div>
<div class="r" style="left:0.00px;top:141.00px;width:1024.00px;height:16.40px;background:#e6e6e6;"></div>
<div class="r" style="left:0.00px;top:156.90px;width:1024.00px;height:1.00px;background:#c9c9c9;"></div>
<div class="r" style="left:0.00px;top:157.40px;width:11.10px;height:443.60px;background:#e6e6e6;"></div>
<div class="r" style="left:10.60px;top:157.40px;width:1.00px;height:443.60px;background:#c9c9c9;"></div>
<div class="r" style="left:10.60px;top:143.50px;width:1.00px;height:14.00px;background:#c9c9c9;"></div>
<div class="r" style="left:10.60px;top:157.40px;width:1.00px;height:443.60px;background:#dedede;"></div>
<div class="r" style="left:67.90px;top:143.50px;width:1.00px;height:14.00px;background:#c9c9c9;"></div>
<div class="r" style="left:67.90px;top:157.40px;width:1.00px;height:443.60px;background:#dedede;"></div>
<div class="r" style="left:124.90px;top:143.50px;width:1.00px;height:14.00px;background:#c9c9c9;"></div>
<div class="r" style="left:124.90px;top:157.40px;width:1.00px;height:443.60px;background:#dedede;"></div>
<div class="r" style="left:257.90px;top:143.50px;width:1.00px;height:14.00px;background:#c9c9c9;"></div>
<div class="r" style="left:257.90px;top:157.40px;width:1.00px;height:443.60px;background:#dedede;"></div>
<div class="r" style="left:405.90px;top:143.50px;width:1.00px;height:14.00px;background:#c9c9c9;"></div>
<div class="r" style="left:405.90px;top:157.40px;width:1.00px;height:443.60px;background:#dedede;"></div>
<div class="r" style="left:497.00px;top:143.50px;width:1.00px;height:14.00px;background:#c9c9c9;"></div>
<div class="r" style="left:497.00px;top:157.40px;width:1.00px;height:443.60px;background:#dedede;"></div>
<div class="r" style="left:554.10px;top:143.50px;width:1.00px;height:14.00px;background:#c9c9c9;"></div>
<div class="r" style="left:554.10px;top:157.40px;width:1.00px;height:443.60px;background:#dedede;"></div>
<div class="r" style="left:611.10px;top:143.50px;width:1.00px;height:14.00px;background:#c9c9c9;"></div>
<div class="r" style="left:611.10px;top:157.40px;width:1.00px;height:443.60px;background:#dedede;"></div>
<div class="r" style="left:668.10px;top:143.50px;width:1.00px;height:14.00px;background:#c9c9c9;"></div>
<div class="r" style="left:668.10px;top:157.40px;width:1.00px;height:443.60px;background:#dedede;"></div>
<div class="r" style="left:725.10px;top:143.50px;width:1.00px;height:14.00px;background:#c9c9c9;"></div>
<div class="r" style="left:725.10px;top:157.40px;width:1.00px;height:443.60px;background:#dedede;"></div>
<div class="r" style="left:782.10px;top:143.50px;width:1.00px;height:14.00px;background:#c9c9c9;"></div>
<div class="r" style="left:782.10px;top:157.40px;width:1.00px;height:443.60px;background:#dedede;"></div>
<div class="r" style="left:839.10px;top:143.50px;width:1.00px;height:14.00px;background:#c9c9c9;"></div>
<div class="r" style="left:839.10px;top:157.40px;width:1.00px;height:443.60px;background:#dedede;"></div>
<div class="r" style="left:896.10px;top:143.50px;width:1.00px;height:14.00px;background:#c9c9c9;"></div>
<div class="r" style="left:896.10px;top:157.40px;width:1.00px;height:443.60px;background:#dedede;"></div>
<div class="r" style="left:953.10px;top:143.50px;width:1.00px;height:14.00px;background:#c9c9c9;"></div>
<div class="r" style="left:953.10px;top:157.40px;width:1.00px;height:443.60px;background:#dedede;"></div>
<div class="r" style="left:1010.10px;top:143.50px;width:1.00px;height:14.00px;background:#c9c9c9;"></div>
<div class="r" style="left:1010.10px;top:157.40px;width:1.00px;height:443.60px;background:#dedede;"></div>
<div class="r" style="left:11.00px;top:171.15px;width:1013.00px;height:1.00px;background:#e2e2e2;"></div>
<div class="r" style="left:0.00px;top:171.15px;width:11.00px;height:1.00px;background:#c9c9c9;"></div>
<div class="r" style="left:11.00px;top:185.40px;width:1013.00px;height:1.00px;background:#e2e2e2;"></div>
<div class="r" style="left:0.00px;top:185.40px;width:11.00px;height:1.00px;background:#c9c9c9;"></div>
<div class="r" style="left:11.00px;top:199.65px;width:1013.00px;height:1.00px;background:#e2e2e2;"></div>
<div class="r" style="left:0.00px;top:199.65px;width:11.00px;height:1.00px;background:#c9c9c9;"></div>
<div class="r" style="left:11.00px;top:213.90px;width:1013.00px;height:1.00px;background:#e2e2e2;"></div>
<div class="r" style="left:0.00px;top:213.90px;width:11.00px;height:1.00px;background:#c9c9c9;"></div>
<div class="r" style="left:11.00px;top:228.15px;width:1013.00px;height:1.00px;background:#e2e2e2;"></div>
<div class="r" style="left:0.00px;top:228.15px;width:11.00px;height:1.00px;background:#c9c9c9;"></div>
<div class="r" style="left:11.00px;top:242.40px;width:1013.00px;height:1.00px;background:#e2e2e2;"></div>
<div class="r" style="left:0.00px;top:242.40px;width:11.00px;height:1.00px;background:#c9c9c9;"></div>
<div class="r" style="left:11.00px;top:256.65px;width:1013.00px;height:1.00px;background:#e2e2e2;"></div>
<div class="r" style="left:0.00px;top:256.65px;width:11.00px;height:1.00px;background:#c9c9c9;"></div>
<div class="r" style="left:11.00px;top:270.90px;width:1013.00px;height:1.00px;background:#e2e2e2;"></div>
<div class="r" style="left:0.00px;top:270.90px;width:11.00px;height:1.00px;background:#c9c9c9;"></div>
<div class="r" style="left:11.00px;top:285.15px;width:1013.00px;height:1.00px;background:#e2e2e2;"></div>
<div class="r" style="left:0.00px;top:285.15px;width:11.00px;height:1.00px;background:#c9c9c9;"></div>
<div class="r" style="left:11.00px;top:299.40px;width:1013.00px;height:1.00px;background:#e2e2e2;"></div>
<div class="r" style="left:0.00px;top:299.40px;width:11.00px;height:1.00px;background:#c9c9c9;"></div>
<div class="r" style="left:11.00px;top:313.65px;width:1013.00px;height:1.00px;background:#e2e2e2;"></div>
<div class="r" style="left:0.00px;top:313.65px;width:11.00px;height:1.00px;background:#c9c9c9;"></div>
<div class="r" style="left:11.00px;top:327.90px;width:1013.00px;height:1.00px;background:#e2e2e2;"></div>
<div class="r" style="left:0.00px;top:327.90px;width:11.00px;height:1.00px;background:#c9c9c9;"></div>
<div class="r" style="left:11.00px;top:342.15px;width:1013.00px;height:1.00px;background:#e2e2e2;"></div>
<div class="r" style="left:0.00px;top:342.15px;width:11.00px;height:1.00px;background:#c9c9c9;"></div>
<div class="r" style="left:11.00px;top:356.40px;width:1013.00px;height:1.00px;background:#e2e2e2;"></div>
<div class="r" style="left:0.00px;top:356.40px;width:11.00px;height:1.00px;background:#c9c9c9;"></div>
<div class="r" style="left:11.00px;top:370.65px;width:1013.00px;height:1.00px;background:#e2e2e2;"></div>
<div class="r" style="left:0.00px;top:370.65px;width:11.00px;height:1.00px;background:#c9c9c9;"></div>
<div class="r" style="left:11.00px;top:384.90px;width:1013.00px;height:1.00px;background:#e2e2e2;"></div>
<div class="r" style="left:0.00px;top:384.90px;width:11.00px;height:1.00px;background:#c9c9c9;"></div>
<div class="r" style="left:11.00px;top:399.15px;width:1013.00px;height:1.00px;background:#e2e2e2;"></div>
<div class="r" style="left:0.00px;top:399.15px;width:11.00px;height:1.00px;background:#c9c9c9;"></div>
<div class="r" style="left:11.00px;top:413.40px;width:1013.00px;height:1.00px;background:#e2e2e2;"></div>
<div class="r" style="left:0.00px;top:413.40px;width:11.00px;height:1.00px;background:#c9c9c9;"></div>
<div class="r" style="left:11.00px;top:427.65px;width:1013.00px;height:1.00px;background:#e2e2e2;"></div>
<div class="r" style="left:0.00px;top:427.65px;width:11.00px;height:1.00px;background:#c9c9c9;"></div>
<div class="r" style="left:11.00px;top:441.90px;width:1013.00px;height:1.00px;background:#e2e2e2;"></div>
<div class="r" style="left:0.00px;top:441.90px;width:11.00px;height:1.00px;background:#c9c9c9;"></div>
<div class="r" style="left:11.00px;top:456.15px;width:1013.00px;height:1.00px;background:#e2e2e2;"></div>
<div class="r" style="left:0.00px;top:456.15px;width:11.00px;height:1.00px;background:#c9c9c9;"></div>
<div class="r" style="left:11.00px;top:470.40px;width:1013.00px;height:1.00px;background:#e2e2e2;"></div>
<div class="r" style="left:0.00px;top:470.40px;width:11.00px;height:1.00px;background:#c9c9c9;"></div>
<div class="r" style="left:11.00px;top:484.65px;width:1013.00px;height:1.00px;background:#e2e2e2;"></div>
<div class="r" style="left:0.00px;top:484.65px;width:11.00px;height:1.00px;background:#c9c9c9;"></div>
<div class="r" style="left:11.00px;top:498.90px;width:1013.00px;height:1.00px;background:#e2e2e2;"></div>
<div class="r" style="left:0.00px;top:498.90px;width:11.00px;height:1.00px;background:#c9c9c9;"></div>
<div class="r" style="left:11.00px;top:513.15px;width:1013.00px;height:1.00px;background:#e2e2e2;"></div>
<div class="r" style="left:0.00px;top:513.15px;width:11.00px;height:1.00px;background:#c9c9c9;"></div>
<div class="r" style="left:11.00px;top:527.40px;width:1013.00px;height:1.00px;background:#e2e2e2;"></div>
<div class="r" style="left:0.00px;top:527.40px;width:11.00px;height:1.00px;background:#c9c9c9;"></div>
<div class="r" style="left:11.00px;top:541.65px;width:1013.00px;height:1.00px;background:#e2e2e2;"></div>
<div class="r" style="left:0.00px;top:541.65px;width:11.00px;height:1.00px;background:#c9c9c9;"></div>
<div class="r" style="left:11.00px;top:555.90px;width:1013.00px;height:1.00px;background:#e2e2e2;"></div>
<div class="r" style="left:0.00px;top:555.90px;width:11.00px;height:1.00px;background:#c9c9c9;"></div>
<div class="r" style="left:11.00px;top:570.15px;width:1013.00px;height:1.00px;background:#e2e2e2;"></div>
<div class="r" style="left:0.00px;top:570.15px;width:11.00px;height:1.00px;background:#c9c9c9;"></div>
<div class="r" style="left:11.00px;top:584.40px;width:1013.00px;height:1.00px;background:#e2e2e2;"></div>
<div class="r" style="left:0.00px;top:584.40px;width:11.00px;height:1.00px;background:#c9c9c9;"></div>
<div class="r" style="left:11.00px;top:598.65px;width:1013.00px;height:1.00px;background:#e2e2e2;"></div>
<div class="r" style="left:0.00px;top:598.65px;width:11.00px;height:1.00px;background:#c9c9c9;"></div>
<span class="t" style="left:36.68px;top:144.00px;font-size:9.80px;line-height:12px;color:#3c3c3c;transform:scaleX(0.9400);transform-origin:0 0;">A</span>
<span class="t" style="left:93.69px;top:144.00px;font-size:9.80px;line-height:12px;color:#3c3c3c;transform:scaleX(0.9400);transform-origin:0 0;">B</span>
<span class="t" style="left:188.52px;top:144.00px;font-size:9.80px;line-height:12px;color:#3c3c3c;transform:scaleX(0.9400);transform-origin:0 0;">C</span>
<span class="t" style="left:328.92px;top:144.00px;font-size:9.80px;line-height:12px;color:#3c3c3c;transform:scaleX(0.9400);transform-origin:0 0;">D</span>
<span class="t" style="left:448.70px;top:144.00px;font-size:9.80px;line-height:12px;color:#3c3c3c;transform:scaleX(0.9400);transform-origin:0 0;">E</span>
<span class="t" style="left:523.04px;top:144.00px;font-size:9.80px;line-height:12px;color:#3c3c3c;transform:scaleX(0.9400);transform-origin:0 0;">F</span>
<span class="t" style="left:579.63px;top:144.00px;font-size:9.80px;line-height:12px;color:#3c3c3c;transform:scaleX(0.9400);transform-origin:0 0;">G</span>
<span class="t" style="left:636.77px;top:144.00px;font-size:9.80px;line-height:12px;color:#3c3c3c;transform:scaleX(0.9400);transform-origin:0 0;">H</span>
<span class="t" style="left:695.82px;top:144.00px;font-size:9.80px;line-height:12px;color:#3c3c3c;transform:scaleX(0.9400);transform-origin:0 0;">I</span>
<span class="t" style="left:752.07px;top:144.00px;font-size:9.80px;line-height:12px;color:#3c3c3c;transform:scaleX(0.9400);transform-origin:0 0;">J</span>
<span class="t" style="left:-0.87px;top:159.22px;font-size:9.80px;line-height:12px;color:#3c3c3c;transform:scaleX(0.9500);transform-origin:0 0;">1</span>
<span class="t" style="left:-0.74px;top:173.47px;font-size:9.80px;line-height:12px;color:#3c3c3c;transform:scaleX(0.9500);transform-origin:0 0;">2</span>
<span class="t" style="left:-0.71px;top:187.72px;font-size:9.80px;line-height:12px;color:#3c3c3c;transform:scaleX(0.9500);transform-origin:0 0;">3</span>
<span class="t" style="left:-0.71px;top:201.97px;font-size:9.80px;line-height:12px;color:#3c3c3c;transform:scaleX(0.9500);transform-origin:0 0;">4</span>
<span class="t" style="left:-0.73px;top:216.22px;font-size:9.80px;line-height:12px;color:#3c3c3c;transform:scaleX(0.9500);transform-origin:0 0;">5</span>
<span class="t" style="left:-0.77px;top:230.47px;font-size:9.80px;line-height:12px;color:#3c3c3c;transform:scaleX(0.9500);transform-origin:0 0;">6</span>
<span class="t" style="left:-0.74px;top:244.72px;font-size:9.80px;line-height:12px;color:#3c3c3c;transform:scaleX(0.9500);transform-origin:0 0;">7</span>
<span class="t" style="left:-0.74px;top:258.97px;font-size:9.80px;line-height:12px;color:#3c3c3c;transform:scaleX(0.9500);transform-origin:0 0;">8</span>
<span class="t" style="left:-0.74px;top:273.22px;font-size:9.80px;line-height:12px;color:#3c3c3c;transform:scaleX(0.9500);transform-origin:0 0;">9</span>
<span class="t" style="left:-3.50px;top:287.47px;font-size:9.80px;line-height:12px;color:#3c3c3c;transform:scaleX(0.9500);transform-origin:0 0;">10</span>
<span class="t" style="left:-3.46px;top:301.72px;font-size:9.80px;line-height:12px;color:#3c3c3c;transform:scaleX(0.9500);transform-origin:0 0;">11</span>
<span class="t" style="left:-3.45px;top:315.97px;font-size:9.80px;line-height:12px;color:#3c3c3c;transform:scaleX(0.9500);transform-origin:0 0;">12</span>
<span class="t" style="left:-3.48px;top:330.22px;font-size:9.80px;line-height:12px;color:#3c3c3c;transform:scaleX(0.9500);transform-origin:0 0;">13</span>
<span class="t" style="left:-3.55px;top:344.47px;font-size:9.80px;line-height:12px;color:#3c3c3c;transform:scaleX(0.9500);transform-origin:0 0;">14</span>
<span class="t" style="left:-3.49px;top:358.72px;font-size:9.80px;line-height:12px;color:#3c3c3c;transform:scaleX(0.9500);transform-origin:0 0;">15</span>
<span class="t" style="left:-3.48px;top:372.97px;font-size:9.80px;line-height:12px;color:#3c3c3c;transform:scaleX(0.9500);transform-origin:0 0;">16</span>
<span class="t" style="left:-3.45px;top:387.22px;font-size:9.80px;line-height:12px;color:#3c3c3c;transform:scaleX(0.9500);transform-origin:0 0;">17</span>
<span class="t" style="left:-3.48px;top:401.47px;font-size:9.80px;line-height:12px;color:#3c3c3c;transform:scaleX(0.9500);transform-origin:0 0;">18</span>
<span class="t" style="left:-3.46px;top:415.72px;font-size:9.80px;line-height:12px;color:#3c3c3c;transform:scaleX(0.9500);transform-origin:0 0;">19</span>
<span class="t" style="left:-3.38px;top:429.97px;font-size:9.80px;line-height:12px;color:#3c3c3c;transform:scaleX(0.9500);transform-origin:0 0;">20</span>
<span class="t" style="left:-3.33px;top:444.22px;font-size:9.80px;line-height:12px;color:#3c3c3c;transform:scaleX(0.9500);transform-origin:0 0;">21</span>
<span class="t" style="left:-3.33px;top:458.47px;font-size:9.80px;line-height:12px;color:#3c3c3c;transform:scaleX(0.9500);transform-origin:0 0;">22</span>
<span class="t" style="left:-3.36px;top:472.72px;font-size:9.80px;line-height:12px;color:#3c3c3c;transform:scaleX(0.9500);transform-origin:0 0;">23</span>
<span class="t" style="left:-3.43px;top:486.97px;font-size:9.80px;line-height:12px;color:#3c3c3c;transform:scaleX(0.9500);transform-origin:0 0;">24</span>
<span class="t" style="left:-3.37px;top:501.22px;font-size:9.80px;line-height:12px;color:#3c3c3c;transform:scaleX(0.9500);transform-origin:0 0;">25</span>
<span class="t" style="left:-3.36px;top:515.48px;font-size:9.80px;line-height:12px;color:#3c3c3c;transform:scaleX(0.9500);transform-origin:0 0;">26</span>
<span class="t" style="left:-3.33px;top:529.73px;font-size:9.80px;line-height:12px;color:#3c3c3c;transform:scaleX(0.9500);transform-origin:0 0;">27</span>
<span class="t" style="left:-3.36px;top:543.98px;font-size:9.80px;line-height:12px;color:#3c3c3c;transform:scaleX(0.9500);transform-origin:0 0;">28</span>
<span class="t" style="left:-3.34px;top:558.23px;font-size:9.80px;line-height:12px;color:#3c3c3c;transform:scaleX(0.9500);transform-origin:0 0;">29</span>
<span class="t" style="left:-3.32px;top:572.48px;font-size:9.80px;line-height:12px;color:#3c3c3c;transform:scaleX(0.9500);transform-origin:0 0;">30</span>
<span class="t" style="left:-3.28px;top:586.73px;font-size:9.80px;line-height:12px;color:#3c3c3c;transform:scaleX(0.9500);transform-origin:0 0;">31</span>
<svg class="r" style="left:0;top:145px" width="11" height="12" viewBox="0 0 11 12"><path d="M9 1.500v8.500h-8.500z" fill="#b7b7b7"/></svg>
<div class="r" style="left:125.40px;top:257.15px;width:133.00px;height:99.75px;background:rgba(126,87,194,.13);"></div>
<div class="r" style="left:124.40px;top:256.15px;width:135.00px;height:101.25px;border:1.500px solid #8a63c8;box-sizing:border-box;"></div>
<div class="r" style="left:123.60px;top:255.35px;width:3.60px;height:3.60px;background:#8a63c8;"></div>
<div class="r" style="left:256.60px;top:255.35px;width:3.60px;height:3.60px;background:#8a63c8;"></div>
<div class="r" style="left:123.60px;top:355.10px;width:3.60px;height:3.60px;background:#8a63c8;"></div>
<div class="r" style="left:256.60px;top:355.10px;width:3.60px;height:3.60px;background:#8a63c8;"></div>
<div class="r" style="left:406.40px;top:242.90px;width:91.00px;height:14.25px;background:rgba(214,70,80,.11);"></div>
<div class="r" style="left:405.40px;top:241.90px;width:93.00px;height:15.25px;border:1.500px solid #d0404c;box-sizing:border-box;"></div>
<div class="r" style="left:406.40px;top:257.15px;width:91.00px;height:99.75px;background:rgba(68,114,196,.13);"></div>
<div class="r" style="left:405.40px;top:256.15px;width:93.00px;height:101.25px;border:1.500px solid #4a7bd0;box-sizing:border-box;"></div>
<div class="r" style="left:404.60px;top:241.10px;width:3.60px;height:3.60px;background:#c8323f;"></div>
<div class="r" style="left:495.70px;top:241.10px;width:3.60px;height:3.60px;background:#c8323f;"></div>
<div class="r" style="left:404.60px;top:255.35px;width:3.60px;height:3.60px;background:#4a7bd0;"></div>
<div class="r" style="left:495.70px;top:255.35px;width:3.60px;height:3.60px;background:#4a7bd0;"></div>
<div class="r" style="left:404.60px;top:355.10px;width:3.60px;height:3.60px;background:#4a7bd0;"></div>
<div class="r" style="left:495.70px;top:355.10px;width:3.60px;height:3.60px;background:#4a7bd0;"></div>
<span class="t" style="left:154.47px;top:244.93px;font-size:10.30px;line-height:12px;color:#222;transform:scaleX(0.9176);transform-origin:0 0;">Día de la semana</span>
<span class="t" style="left:178.48px;top:259.17px;font-size:10.30px;line-height:12px;color:#222;transform:scaleX(0.9405);transform-origin:0 0;">Lunes</span>
<span class="t" style="left:176.06px;top:273.42px;font-size:10.30px;line-height:12px;color:#222;transform:scaleX(0.9914);transform-origin:0 0;">Martes</span>
<span class="t" style="left:169.55px;top:287.67px;font-size:10.30px;line-height:12px;color:#222;transform:scaleX(1.0034);transform-origin:0 0;">Miércoles</span>
<span class="t" style="left:177.00px;top:301.92px;font-size:10.30px;line-height:12px;color:#222;transform:scaleX(0.9189);transform-origin:0 0;">Jueves</span>
<span class="t" style="left:174.98px;top:316.17px;font-size:10.30px;line-height:12px;color:#222;transform:scaleX(0.9781);transform-origin:0 0;">Viernes</span>
<span class="t" style="left:175.60px;top:330.42px;font-size:10.30px;line-height:12px;color:#222;transform:scaleX(0.9173);transform-origin:0 0;">Sábado</span>
<span class="t" style="left:171.31px;top:344.67px;font-size:10.30px;line-height:12px;color:#222;transform:scaleX(0.9889);transform-origin:0 0;">Domingo</span>
<span class="t" style="left:288.38px;top:244.93px;font-size:10.30px;line-height:12px;color:#222;transform:scaleX(0.9588);transform-origin:0 0;">Artículos publicados</span>
<span class="t" style="left:329.65px;top:259.17px;font-size:10.30px;line-height:12px;color:#222;transform:scaleX(0.9624);transform-origin:0 0;">5</span>
<span class="t" style="left:329.53px;top:273.42px;font-size:10.30px;line-height:12px;color:#222;transform:scaleX(0.9889);transform-origin:0 0;">6</span>
<span class="t" style="left:329.52px;top:287.67px;font-size:10.30px;line-height:12px;color:#222;transform:scaleX(1.0038);transform-origin:0 0;">7</span>
<span class="t" style="left:329.53px;top:301.92px;font-size:10.30px;line-height:12px;color:#222;transform:scaleX(0.9889);transform-origin:0 0;">6</span>
<span class="t" style="left:329.65px;top:316.17px;font-size:10.30px;line-height:12px;color:#222;transform:scaleX(0.9624);transform-origin:0 0;">5</span>
<span class="t" style="left:329.67px;top:330.42px;font-size:10.30px;line-height:12px;color:#222;transform:scaleX(0.9624);transform-origin:0 0;">3</span>
<span class="t" style="left:329.65px;top:344.67px;font-size:10.30px;line-height:12px;color:#222;transform:scaleX(0.9624);transform-origin:0 0;">5</span>
<span class="t" style="left:421.66px;top:244.93px;font-size:10.30px;line-height:12px;color:#222;transform:scaleX(0.9585);transform-origin:0 0;">Visitas diarias</span>
<span class="t" style="left:446.72px;top:259.17px;font-size:10.30px;line-height:12px;color:#222;transform:scaleX(0.9051);transform-origin:0 0;">75</span>
<span class="t" style="left:446.79px;top:273.42px;font-size:10.30px;line-height:12px;color:#222;transform:scaleX(0.9055);transform-origin:0 0;">82</span>
<span class="t" style="left:443.55px;top:287.67px;font-size:10.30px;line-height:12px;color:#222;transform:scaleX(0.9564);transform-origin:0 0;">120</span>
<span class="t" style="left:443.55px;top:301.92px;font-size:10.30px;line-height:12px;color:#222;transform:scaleX(0.9504);transform-origin:0 0;">104</span>
<span class="t" style="left:446.72px;top:316.17px;font-size:10.30px;line-height:12px;color:#222;transform:scaleX(0.9064);transform-origin:0 0;">78</span>
<span class="t" style="left:446.73px;top:330.42px;font-size:10.30px;line-height:12px;color:#222;transform:scaleX(0.9060);transform-origin:0 0;">68</span>
<span class="t" style="left:446.72px;top:344.67px;font-size:10.30px;line-height:12px;color:#222;transform:scaleX(0.9125);transform-origin:0 0;">72</span>
<div class="r" style="left:279.75px;top:391.60px;width:342.95px;height:205.90px;background:#fff;border:1px solid #9c9c9c;box-sizing:border-box;"></div>
<span class="t" style="left:405.72px;top:399.50px;font-size:13.20px;line-height:16px;color:#595959;transform:scaleX(0.9304);transform-origin:0 0;">Título del gráfico</span>
<svg class="r" style="left:0;top:380px" width="700" height="221" viewBox="0 380 700 221"><rect x="307.0" y="552.50" width="304.2" height="1" fill="#dcdcdc"/><rect x="307.0" y="534.50" width="304.2" height="1" fill="#dcdcdc"/><rect x="307.0" y="516.80" width="304.2" height="1" fill="#dcdcdc"/><rect x="307.0" y="498.80" width="304.2" height="1" fill="#dcdcdc"/><rect x="307.0" y="480.30" width="304.2" height="1" fill="#dcdcdc"/><rect x="307.0" y="462.50" width="304.2" height="1" fill="#dcdcdc"/><rect x="307.0" y="444.60" width="304.2" height="1" fill="#dcdcdc"/><rect x="307.0" y="425.90" width="304.2" height="1" fill="#dcdcdc"/><rect x="318.07" y="548.50" width="9.34" height="4.50" fill="#4472c4"/><rect x="330.44" y="485.43" width="9.74" height="67.57" fill="#ed7d31" stroke="#b9855c" stroke-width=".4"/><rect x="361.53" y="547.60" width="9.34" height="5.40" fill="#4472c4"/><rect x="373.90" y="479.02" width="9.74" height="73.98" fill="#ed7d31" stroke="#b9855c" stroke-width=".4"/><rect x="404.98" y="546.70" width="9.34" height="6.30" fill="#4472c4"/><rect x="417.36" y="445.10" width="9.74" height="107.90" fill="#ed7d31" stroke="#b9855c" stroke-width=".4"/><rect x="448.44" y="547.60" width="9.34" height="5.40" fill="#4472c4"/><rect x="460.82" y="459.42" width="9.74" height="93.58" fill="#ed7d31" stroke="#b9855c" stroke-width=".4"/><rect x="491.90" y="548.50" width="9.34" height="4.50" fill="#4472c4"/><rect x="504.27" y="482.65" width="9.74" height="70.35" fill="#ed7d31" stroke="#b9855c" stroke-width=".4"/><rect x="535.36" y="550.30" width="9.34" height="2.70" fill="#4472c4"/><rect x="547.73" y="491.90" width="9.74" height="61.10" fill="#ed7d31" stroke="#b9855c" stroke-width=".4"/><rect x="578.81" y="548.50" width="9.34" height="4.50" fill="#4472c4"/><rect x="591.19" y="488.20" width="9.74" height="64.80" fill="#ed7d31" stroke="#b9855c" stroke-width=".4"/><circle cx="330.44" cy="485.43" r="1.900" fill="#eaf3fc" stroke="#4a9be0" stroke-width="1.300"/><circle cx="340.19" cy="485.43" r="1.900" fill="#eaf3fc" stroke="#4a9be0" stroke-width="1.300"/><circle cx="330.44" cy="553.00" r="1.900" fill="#eaf3fc" stroke="#4a9be0" stroke-width="1.300"/><circle cx="340.19" cy="553.00" r="1.900" fill="#eaf3fc" stroke="#4a9be0" stroke-width="1.300"/><circle cx="373.90" cy="479.02" r="1.900" fill="#eaf3fc" stroke="#4a9be0" stroke-width="1.300"/><circle cx="383.64" cy="479.02" r="1.900" fill="#eaf3fc" stroke="#4a9be0" stroke-width="1.300"/><circle cx="373.90" cy="553.00" r="1.900" fill="#eaf3fc" stroke="#4a9be0" stroke-width="1.300"/><circle cx="383.64" cy="553.00" r="1.900" fill="#eaf3fc" stroke="#4a9be0" stroke-width="1.300"/><circle cx="417.36" cy="445.10" r="1.900" fill="#eaf3fc" stroke="#4a9be0" stroke-width="1.300"/><circle cx="427.10" cy="445.10" r="1.900" fill="#eaf3fc" stroke="#4a9be0" stroke-width="1.300"/><circle cx="417.36" cy="553.00" r="1.900" fill="#eaf3fc" stroke="#4a9be0" stroke-width="1.300"/><circle cx="427.10" cy="553.00" r="1.900" fill="#eaf3fc" stroke="#4a9be0" stroke-width="1.300"/><circle cx="460.82" cy="459.42" r="1.900" fill="#eaf3fc" stroke="#4a9be0" stroke-width="1.300"/><circle cx="470.56" cy="459.42" r="1.900" fill="#eaf3fc" stroke="#4a9be0" stroke-width="1.300"/><circle cx="460.82" cy="553.00" r="1.900" fill="#eaf3fc" stroke="#4a9be0" stroke-width="1.300"/><circle cx="470.56" cy="553.00" r="1.900" fill="#eaf3fc" stroke="#4a9be0" stroke-width="1.300"/><circle cx="504.27" cy="482.65" r="1.900" fill="#eaf3fc" stroke="#4a9be0" stroke-width="1.300"/><circle cx="514.02" cy="482.65" r="1.900" fill="#eaf3fc" stroke="#4a9be0" stroke-width="1.300"/><circle cx="504.27" cy="553.00" r="1.900" fill="#eaf3fc" stroke="#4a9be0" stroke-width="1.300"/><circle cx="514.02" cy="553.00" r="1.900" fill="#eaf3fc" stroke="#4a9be0" stroke-width="1.300"/><circle cx="547.73" cy="491.90" r="1.900" fill="#eaf3fc" stroke="#4a9be0" stroke-width="1.300"/><circle cx="557.47" cy="491.90" r="1.900" fill="#eaf3fc" stroke="#4a9be0" stroke-width="1.300"/><circle cx="547.73" cy="553.00" r="1.900" fill="#eaf3fc" stroke="#4a9be0" stroke-width="1.300"/><circle cx="557.47" cy="553.00" r="1.900" fill="#eaf3fc" stroke="#4a9be0" stroke-width="1.300"/><circle cx="591.19" cy="488.20" r="1.900" fill="#eaf3fc" stroke="#4a9be0" stroke-width="1.300"/><circle cx="600.93" cy="488.20" r="1.900" fill="#eaf3fc" stroke="#4a9be0" stroke-width="1.300"/><circle cx="591.19" cy="553.00" r="1.900" fill="#eaf3fc" stroke="#4a9be0" stroke-width="1.300"/><circle cx="600.93" cy="553.00" r="1.900" fill="#eaf3fc" stroke="#4a9be0" stroke-width="1.300"/><rect x="381.500" y="581" width="4.200" height="4.200" fill="#4472c4"/><rect x="470.500" y="581" width="4.200" height="4.200" fill="#ed7d31"/><rect x="411" y="436.500" width="25.750" height="121.800" fill="none" stroke="#ed1c24" stroke-width="3.500"/><circle cx="280.2" cy="392.1" r="3.300" fill="#fff" stroke="#808080" stroke-width="1.200"/><circle cx="451.0" cy="392.1" r="3.300" fill="#fff" stroke="#808080" stroke-width="1.200"/><circle cx="622.2" cy="392.1" r="3.300" fill="#fff" stroke="#808080" stroke-width="1.200"/><circle cx="280.2" cy="494.5" r="3.300" fill="#fff" stroke="#808080" stroke-width="1.200"/><circle cx="622.2" cy="494.5" r="3.300" fill="#fff" stroke="#808080" stroke-width="1.200"/><circle cx="280.2" cy="597.0" r="3.300" fill="#fff" stroke="#808080" stroke-width="1.200"/><circle cx="451.0" cy="597.0" r="3.300" fill="#fff" stroke="#808080" stroke-width="1.200"/><circle cx="622.2" cy="597.0" r="3.300" fill="#fff" stroke="#808080" stroke-width="1.200"/></svg>
<span class="t" style="left:294.58px;top:547.10px;font-size:8.80px;line-height:12px;color:#666;transform:scaleX(0.9271);transform-origin:0 0;">0</span>
<span class="t" style="left:290.20px;top:529.10px;font-size:8.80px;line-height:12px;color:#666;transform:scaleX(0.9109);transform-origin:0 0;">20</span>
<span class="t" style="left:290.42px;top:511.40px;font-size:8.80px;line-height:12px;color:#666;transform:scaleX(0.8872);transform-origin:0 0;">40</span>
<span class="t" style="left:290.19px;top:493.40px;font-size:8.80px;line-height:12px;color:#666;transform:scaleX(0.9113);transform-origin:0 0;">60</span>
<span class="t" style="left:290.25px;top:474.90px;font-size:8.80px;line-height:12px;color:#666;transform:scaleX(0.9049);transform-origin:0 0;">80</span>
<span class="t" style="left:285.79px;top:457.10px;font-size:8.80px;line-height:12px;color:#666;transform:scaleX(0.9072);transform-origin:0 0;">100</span>
<span class="t" style="left:285.79px;top:439.20px;font-size:8.80px;line-height:12px;color:#666;transform:scaleX(0.9072);transform-origin:0 0;">120</span>
<span class="t" style="left:285.79px;top:420.50px;font-size:8.80px;line-height:12px;color:#666;transform:scaleX(0.9072);transform-origin:0 0;">140</span>
<span class="t" style="left:317.83px;top:558.20px;font-size:8.80px;line-height:12px;color:#666;transform:scaleX(0.8938);transform-origin:0 0;">Lunes</span>
<span class="t" style="left:359.25px;top:558.20px;font-size:8.80px;line-height:12px;color:#666;transform:scaleX(0.9476);transform-origin:0 0;">Martes</span>
<span class="t" style="left:397.97px;top:558.20px;font-size:8.80px;line-height:12px;color:#666;transform:scaleX(0.9286);transform-origin:0 0;">Miércoles</span>
<span class="t" style="left:447.23px;top:558.20px;font-size:8.80px;line-height:12px;color:#666;transform:scaleX(0.8568);transform-origin:0 0;">Jueves</span>
<span class="t" style="left:489.27px;top:558.20px;font-size:8.80px;line-height:12px;color:#666;transform:scaleX(0.8989);transform-origin:0 0;">Viernes</span>
<span class="t" style="left:532.92px;top:558.20px;font-size:8.80px;line-height:12px;color:#666;transform:scaleX(0.8623);transform-origin:0 0;">Sábado</span>
<span class="t" style="left:573.06px;top:558.20px;font-size:8.80px;line-height:12px;color:#666;transform:scaleX(0.9231);transform-origin:0 0;">Domingo</span>
<span class="t" style="left:387.98px;top:577.20px;font-size:8.80px;line-height:12px;color:#666;transform:scaleX(0.8927);transform-origin:0 0;">Artículos publicados</span>
<span class="t" style="left:476.97px;top:577.20px;font-size:8.80px;line-height:12px;color:#666;transform:scaleX(0.8771);transform-origin:0 0;">Visitas diarias</span>
<div class="r" style="left:632.00px;top:391.30px;width:20.00px;height:20.00px;background:#fdfdfd;border:1px solid #c6c6c6;box-sizing:border-box;"></div>
<div class="r" style="left:632.00px;top:418.30px;width:20.00px;height:20.00px;background:#fdfdfd;border:1px solid #c6c6c6;box-sizing:border-box;"></div>
<div class="r" style="left:632.00px;top:445.30px;width:20.00px;height:20.00px;background:#fdfdfd;border:1px solid #c6c6c6;box-sizing:border-box;"></div>
<svg class="r" style="left:632px;top:391px" width="21" height="76" viewBox="632 391 21 76">
<path d="M640.700 396.300h2.600v3.700h3.700v2.600h-3.700v3.700h-2.600v-3.700h-3.700v-2.600h3.700z" fill="#5aa283"/>
<path d="M648.300 422.500c-2 1.500-4.200 4-5.600 6.300l1.500 1.200c1.700-2 3.400-4.700 4.100-7.500z" fill="#555"/>
<path d="M642.500 428.900l2 1.600c-.7 2.400-3.300 3.500-8.800 3.400 3-.7 4.100-1.900 4.600-3.500.3-1.100 1.300-1.800 2.200-1.500z" fill="#3f7fd0"/>
<path d="M636 450.300h12.300l-4.800 5.500v5.600l-2.600-1.600v-4z" fill="#6b6b6b"/>
</svg>
<div class="r" style="left:791.40px;top:110.50px;width:240.00px;height:118.60px;background:#fff;border:1px solid #c8c8c8;box-sizing:border-box;box-shadow:1px 1px 3px rgba(0,0,0,.18);"></div>
<span class="t" style="left:799.66px;top:115.20px;font-size:9.20px;line-height:12px;color:#505050;transform:scaleX(0.9018);transform-origin:0 0;font-weight:bold;">Cambiar tipo de gráfico</span>
<span class="t" style="left:877.06px;top:130.20px;font-size:9.00px;line-height:12px;color:#555;transform:scaleX(0.9542);transform-origin:0 0;">Cambie a un tipo diferente de gráfico.</span>
<svg class="r" style="left:799px;top:130px" width="70" height="92" viewBox="799 130 70 92"><rect x="799.500" y="130.500" width="68.500" height="91" fill="#fff" stroke="#d0d0d0"/><rect x="805.500" y="138.35" width="60.500" height=".800" fill="#b0b0b0"/><rect x="805.500" y="151.60" width="60.500" height=".800" fill="#b0b0b0"/><rect x="805.500" y="166.10" width="60.500" height=".800" fill="#b0b0b0"/><rect x="805.500" y="180.85" width="60.500" height=".800" fill="#b0b0b0"/><rect x="805.500" y="194.60" width="60.500" height=".800" fill="#b0b0b0"/><rect x="805.500" y="208.80" width="60.500" height=".800" fill="#b0b0b0"/><rect x="806.600" y="137" width=".900" height="73" fill="#777"/><rect x="808.0" y="152.00" width="9.800" height="57.20" fill="#d9603f"/><rect x="819.3" y="181.25" width="9.800" height="27.95" fill="#e98c44"/><rect x="830.6" y="166.50" width="9.800" height="42.70" fill="#4a7fba"/><rect x="842.2" y="138.75" width="9.800" height="70.45" fill="#75a793"/><rect x="853.8" y="166.50" width="9.800" height="42.70" fill="#9467bf"/><text x="802.700" y="140.6" font-family="Liberation Sans, sans-serif" font-size="5" font-weight="bold" fill="#4a4a4a" text-anchor="middle">5</text><text x="802.700" y="153.8" font-family="Liberation Sans, sans-serif" font-size="5" font-weight="bold" fill="#4a4a4a" text-anchor="middle">4</text><text x="802.700" y="168.3" font-family="Liberation Sans, sans-serif" font-size="5" font-weight="bold" fill="#4a4a4a" text-anchor="middle">3</text><text x="802.700" y="183.1" font-family="Liberation Sans, sans-serif" font-size="5" font-weight="bold" fill="#4a4a4a" text-anchor="middle">2</text><text x="802.700" y="196.8" font-family="Liberation Sans, sans-serif" font-size="5" font-weight="bold" fill="#4a4a4a" text-anchor="middle">1</text><text x="802.700" y="211.0" font-family="Liberation Sans, sans-serif" font-size="5" font-weight="bold" fill="#4a4a4a" text-anchor="middle">0</text><text x="813.0" y="217.700" font-family="Liberation Sans, sans-serif" font-size="5" font-weight="bold" fill="#4a4a4a" text-anchor="middle">1</text><text x="824.4" y="217.700" font-family="Liberation Sans, sans-serif" font-size="5" font-weight="bold" fill="#4a4a4a" text-anchor="middle">2</text><text x="835.8" y="217.700" font-family="Liberation Sans, sans-serif" font-size="5" font-weight="bold" fill="#4a4a4a" text-anchor="middle">3</text><text x="847.2" y="217.700" font-family="Liberation Sans, sans-serif" font-size="5" font-weight="bold" fill="#4a4a4a" text-anchor="middle">4</text><text x="858.6" y="217.700" font-family="Liberation Sans, sans-serif" font-size="5" font-weight="bold" fill="#4a4a4a" text-anchor="middle">5</text></svg>
<svg class="r" style="left:0;top:44px" width="1024" height="66" viewBox="0 44 1024 66">
<!-- agregar elemento -->
<rect x="26" y="56" width="4.800" height="13" fill="#4a7ebb"/><rect x="31.300" y="50.500" width="4.800" height="18.500" fill="#f0c875"/><rect x="36.900" y="54.300" width="5" height="9" fill="#7f7f7f"/>
<path d="M39.900 62.300h3v2.900h2.900v3h-2.900v2.900h-3v-2.900h-2.900v-3h2.900z" fill="#5aa283" stroke="#f3f3f3" stroke-width=".700"/>
<!-- diseño rápido -->
<rect x="75.600" y="48.900" width="21.500" height="21.500" fill="#fff" stroke="#b9b9b9"/>
<rect x="79" y="51.300" width="11.800" height="1.300" fill="#c4c4c4"/>
<path d="M76 57h2M76 60h2M76 63h2" stroke="#c9c9c9" stroke-width=".700"/>
<rect x="78.300" y="54.600" width="13.400" height="11.200" fill="none" stroke="#8f8f8f" stroke-width=".800"/>
<path d="M78.300 57.500h13.400M78.300 60.300h13.400M78.300 63h13.400" stroke="#d4d4d4" stroke-width=".600"/>
<rect x="80.200" y="59.800" width="2" height="5.600" fill="#f7f7f7" stroke="#7f7f7f" stroke-width=".700"/><rect x="82.500" y="56.400" width="2.400" height="9" fill="#f7f7f7" stroke="#7f7f7f" stroke-width=".700"/><rect x="85.800" y="58.400" width="2.400" height="7" fill="#f7f7f7" stroke="#7f7f7f" stroke-width=".700"/><rect x="88.900" y="61.300" width="2" height="4.100" fill="#f7f7f7" stroke="#7f7f7f" stroke-width=".700"/>
<rect x="92.900" y="55.400" width="3" height="6.400" fill="#fff" stroke="#8f8f8f" stroke-width=".700"/><path d="M94 57h1M94 58.600h1M94 60.200h1" stroke="#aaa" stroke-width=".500"/>
<rect x="80.500" y="67.600" width="3" height=".900" fill="#c4c4c4"/><rect x="86.800" y="67.600" width="3" height=".900" fill="#c4c4c4"/>
<!-- cambiar colores -->
<circle cx="128.200" cy="53.500" r="2.850" fill="#f0a23c"/><circle cx="137" cy="53.400" r="2.850" fill="#4b9b84"/><circle cx="125.300" cy="61.300" r="2.850" fill="#d8452f"/><circle cx="139.900" cy="61.300" r="2.850" fill="#3f78c0"/><circle cx="132.600" cy="66.100" r="2.850" fill="#ef6a1f"/>
<!-- cambiar fila/columna -->
<rect x="697" y="50.500" width="20" height="17.800" fill="#fff" stroke="#b4b4b4"/><rect x="696.500" y="50" width="21" height="3.300" fill="#8c8c8c"/>
<path d="M697 57h20M697 60.800h20M697 64.600h20M702 53.500v15M707 53.500v15M712 53.500v15" stroke="#d6d6d6" stroke-width="1" fill="none"/>
<path d="M712.500 56.300v7.300h-8M707.500 59.800h5" fill="none" stroke="#f0a878" stroke-width="1"/>
<path d="M700.300 60.900C700.800 57.100 704 55.100 707.500 56.400" fill="none" stroke="#3e7fc6" stroke-width="1.800"/><path d="M706.400 53.400l4.100 4.100-4.800 1.400z" fill="#3e7fc6"/>
<path d="M709.300 58.500C708.800 62.300 705.600 64.300 702.100 63" fill="none" stroke="#3e7fc6" stroke-width="1.800"/><path d="M703.200 66l-4.100-4.100 4.800-1.400z" fill="#3e7fc6"/>
<!-- seleccionar datos -->
<rect x="746.700" y="51" width="19.600" height="17.300" fill="#fff" stroke="#b4b4b4"/><rect x="746.200" y="50.500" width="20.600" height="3.300" fill="#8c8c8c"/>
<path d="M746.700 57.500h19.600M746.700 61.200h19.600M746.700 64.900h19.600M751.600 54v14M756.500 54v14M761.400 54v14" stroke="#d6d6d6" stroke-width="1" fill="none"/>
<rect x="751.300" y="57.300" width="10.300" height="7.200" fill="none" stroke="#f0a070" stroke-width="1"/>
<rect x="756.600" y="60.400" width="11.200" height="10.300" fill="#fff" stroke="#9a9a9a" stroke-width=".900"/>
<rect x="758.600" y="64.500" width="2" height="5.800" fill="#dcdcdc" stroke="#8a8a8a" stroke-width=".600"/><rect x="761.200" y="62.300" width="2.300" height="8" fill="#dcdcdc" stroke="#8a8a8a" stroke-width=".600"/><rect x="764.200" y="65.500" width="2.300" height="4.800" fill="#dcdcdc" stroke="#8a8a8a" stroke-width=".600"/>
<!-- cambiar tipo -->
<rect x="809.300" y="56.300" width="4.800" height="12.500" fill="#4a7ebb"/><rect x="815.200" y="51" width="4.800" height="17.800" fill="#f0c875"/><rect x="821.100" y="54.300" width="4.800" height="14.500" fill="#7f7f7f"/>
<!-- mover -->
<path d="M861 50.700h19.600v15.500h-7.600c-.8 1.900-3.200 2.300-5.400 2h-6.600z" fill="#fff" stroke="#b0b0b0" stroke-width="1"/>
<path d="M868.300 66.300c1.300 .6 3.300 .5 4.700-.1" fill="none" stroke="#b0b0b0" stroke-width=".800"/>
<rect x="864.700" y="56.300" width="3" height="6.300" fill="#fff" stroke="#9c9c9c" stroke-width=".800"/><rect x="867.900" y="53.400" width="3" height="9.200" fill="#d9d9d9" stroke="#9c9c9c" stroke-width=".800"/><rect x="871.300" y="55.800" width="3.200" height="6.800" fill="#fff" stroke="#9c9c9c" stroke-width=".800"/><rect x="874.700" y="58.700" width="2.800" height="3.900" fill="#e4e4e4" stroke="#9c9c9c" stroke-width=".800"/>
</svg>
</div></body></html>
